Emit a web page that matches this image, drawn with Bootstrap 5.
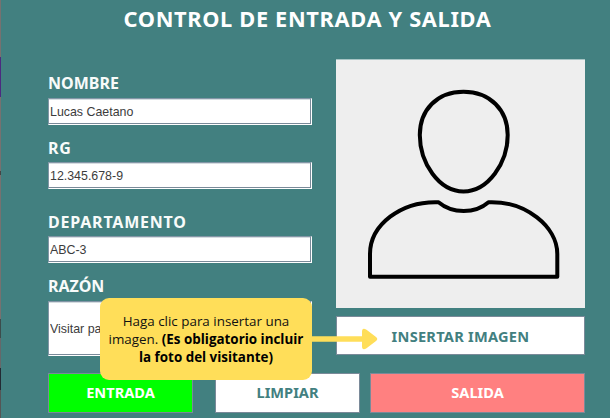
<!DOCTYPE html>
<html lang="es">
<head>
<meta charset="utf-8">
<meta name="viewport" content="width=device-width, initial-scale=1">
<title>Control de entrada y salida</title>
<link href="https://cdn.jsdelivr.net/npm/bootstrap@5.3.0/dist/css/bootstrap.min.css" rel="stylesheet">
<style>
  body { width: 610px; height: 418px; background: #428080; font-family: "Noto Sans", sans-serif; }
  .edge-strip { width: 1px; flex: none; background: linear-gradient(#777170 57px, #4b2a80 57px 97px, #777170 97px 171px, #444 171px 175px, #777170 175px 319px, #3c4c4c 319px 338px, #66686a 338px 368px, #232a33 368px 390px, #555 390px); }
  .visit-form { padding: 0 25px 0 47px; }
  .form-title { height: 59px; padding: 4px 30px 0 0; font-size: 21.8px; line-height: 29px; font-weight: 700; letter-spacing: .66px; }
  .columns { height: 314px; display: grid; grid-template-columns: 264px 249px; column-gap: 24px; }
  .field-label { display: block; font-size: 16px; line-height: 22px; font-weight: 700; margin: 0 0 3px; color: #f8fbfa; }
  .label-wide { letter-spacing: .8px; }
  .fields { padding-top: 13px; }
  .fields .form-control { height: 27px; margin-bottom: 12px; padding: 0 0 0 1px; border: 1px solid; border-color: #8296a6 #fff #fff #8296a6; border-radius: 0; box-shadow: inset -1px -1px #7a8a99, inset 0 1px #d5dce0; color: #3c3c3c; font: 12.4px "Liberation Sans", Arial, sans-serif; }
  .fields .label-gap { margin-bottom: 4px; }
  .fields .gap-large { margin-bottom: 22px; }
  .fields .tall { height: 55px; }
  .portrait { display: block; width: 249px; height: 249px; background: #eee; border-top: 1px solid #a7c5c5; }
  .action { border: 1px solid #7a8a99; border-radius: 0; padding: 0 0 2px; font-size: 14.6px; line-height: 20px; font-weight: 700; height: 40px; }
  .action-white, .action-white:hover { background: #fff; color: #428080; border-color: #7a8a99; }
  .action-green { background: #0f0; color: #fff; border-color: #7a8a99; }
  .action-red { background: #ff8080; color: #fff; border-color: #7a8a99; }
  .insert { margin-top: 8px; height: 39px; padding-bottom: 0; letter-spacing: .25px; }
  .actions { display: grid; grid-template-columns: 145px 145px 215px; column-gap: 22px; }
  .actions .action-red { margin-left: -12px; width: 215px; }
  .hint { left: 100px; top: 298px; width: 212px; height: 82px; border-radius: 9px; background: #ffde59; color: #111; font: 13.4px/18px "Open Sans", sans-serif; }
  .hint b { color: #000; }
  .hint-arrow { left: 311px; top: 328px; }
</style>
</head>
<body class="position-relative overflow-hidden d-flex">
<div class="edge-strip"></div>
<main class="visit-form flex-grow-1">
  <h1 class="form-title text-white text-center text-nowrap m-0">CONTROL DE ENTRADA Y SALIDA</h1>
  <div class="columns">
    <div class="fields">
      <label class="field-label label-gap" for="nombre">NOMBRE</label>
      <input class="form-control" id="nombre" value="Lucas Caetano">
      <label class="field-label label-wide" for="rg">RG</label>
      <input class="form-control gap-large" id="rg" value="12.345.678-9">
      <label class="field-label label-wide" for="dep">DEPARTAMENTO</label>
      <input class="form-control" id="dep" value="ABC-3">
      <label class="field-label label-gap" for="razon">RAZÓN</label>
      <input class="form-control tall" id="razon" value="Visitar pa">
    </div>
    <div>
      <svg class="portrait" viewBox="336 60 249 248" fill="none" stroke="#000" stroke-width="4" stroke-linejoin="round" aria-hidden="true">
        <path d="M463.5 91.7C437 91.7 419.8 110 419.8 135C419.8 163 439 191.4 463.5 191.4S507.7 163 507.7 135C507.7 110 490 91.7 463.5 91.7Z"/>
        <path d="M370 276.7V254C370 225 401 200.800 438.500 202.200Q449 211 463.700 211T488.500 202.200C526 200.800 557.300 227 557.300 254V276.700Z"/>
      </svg>
      <button class="btn action action-white insert w-100 d-block">INSERTAR IMAGEN</button>
    </div>
  </div>
  <div class="actions">
    <button class="btn action action-green">ENTRADA</button>
    <button class="btn action action-white">LIMPIAR</button>
    <button class="btn action action-red">SALIDA</button>
  </div>
</main>
<svg class="hint-arrow position-absolute" width="68" height="22" fill="#ffde59" aria-hidden="true">
  <path d="M0 8.300H51V4Q51 -1 55.500 1.800L65 9Q67.500 11 65 13L55.500 20.300Q51 23 51 18V13.700H0Z"/>
</svg>
<div class="hint position-absolute d-flex align-items-center justify-content-center text-center">
  <div class="text-nowrap">Haga clic para insertar una<br>imagen. <b>(Es obligatorio incluir<br>la foto del visitante)</b></div>
</div>
<script src="https://cdn.jsdelivr.net/npm/bootstrap@5.3.0/dist/js/bootstrap.bundle.min.js"></script>
</body>
</html>
